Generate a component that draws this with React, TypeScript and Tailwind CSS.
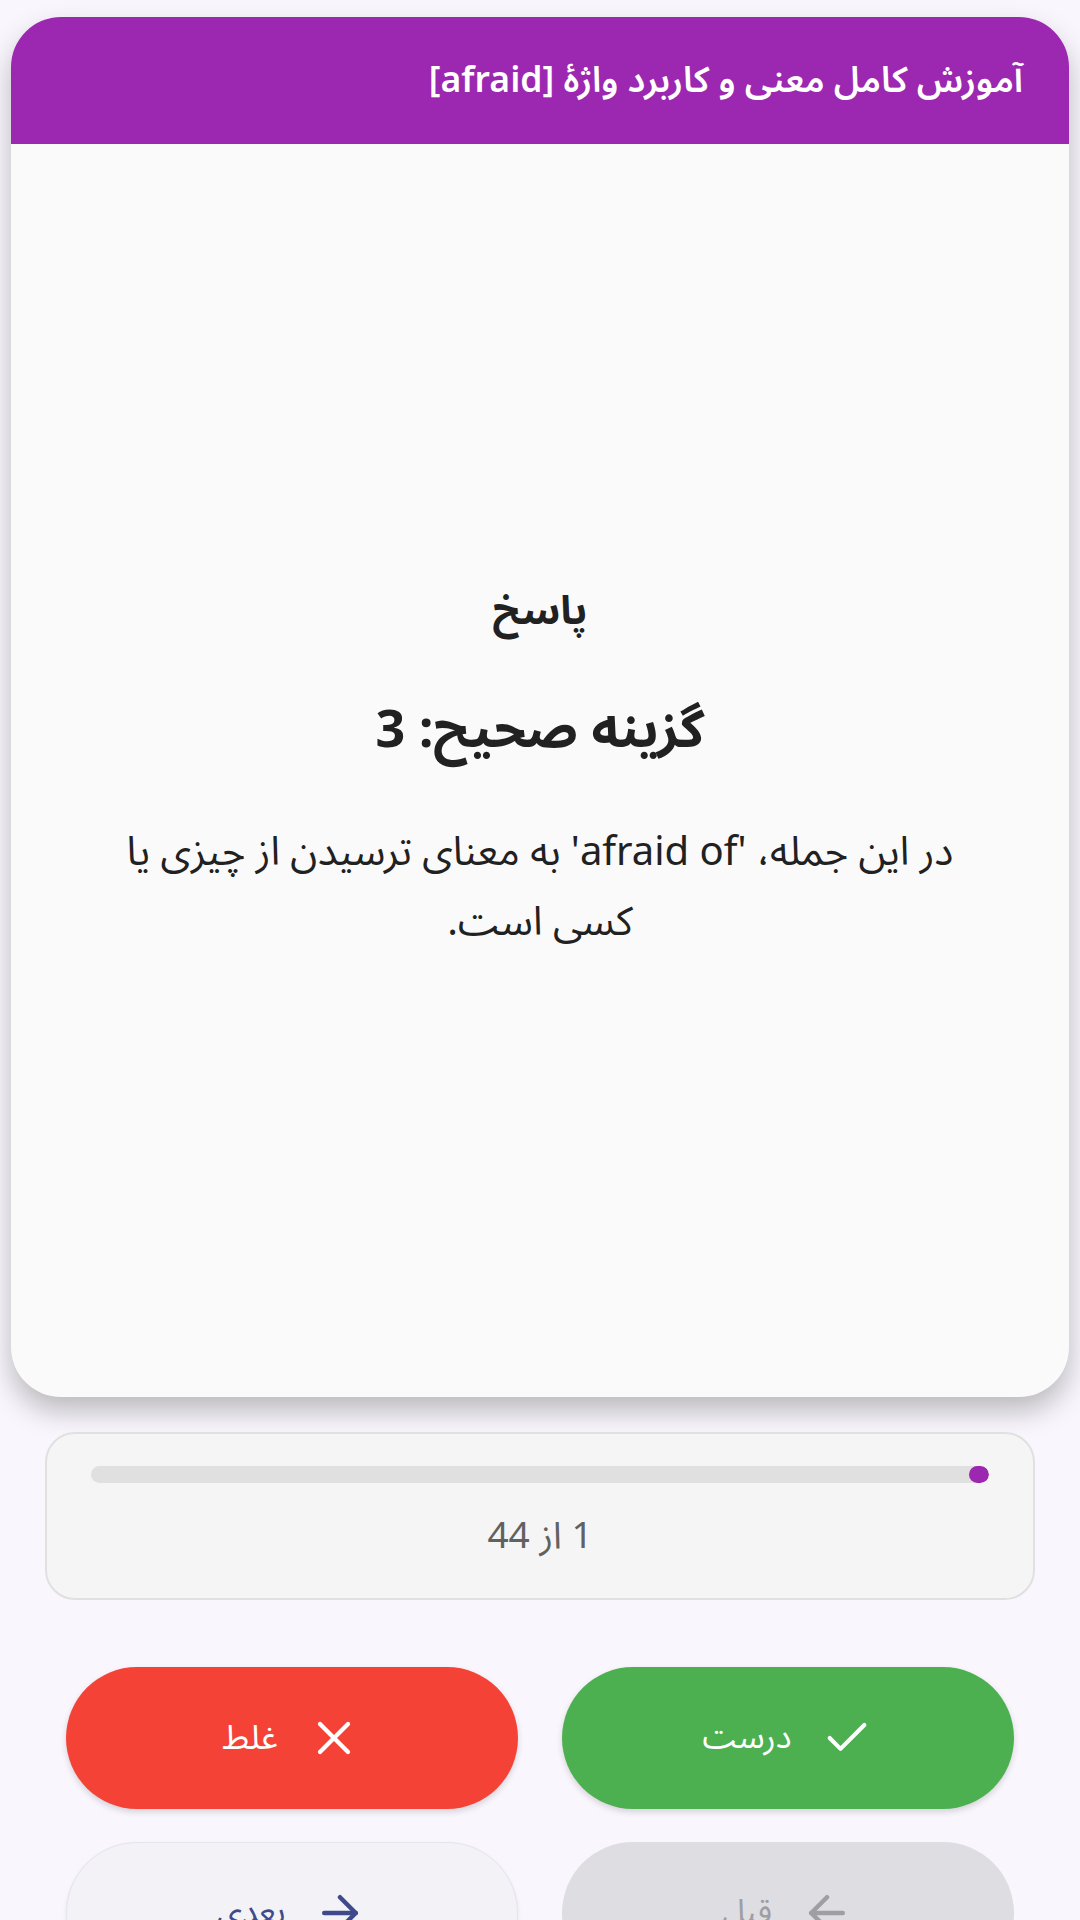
import { ArrowLeft, ArrowRight, Check, X } from 'lucide-react';

const font = {
  fontFamily: '"Noto Sans Arabic", "Noto Naskh Arabic", Roboto, "DejaVu Sans", sans-serif',
};

export default function App() {
  const current = 1;
  const total = 44;

  return (
    <div dir="rtl" style={font} className="w-[1080px] h-[1920px] overflow-hidden bg-[#f9f7fd]">
      <div className="px-[11px] pt-[17px]">
        {/* flashcard */}
        <div className="h-[1380px] rounded-[50px] bg-[#fafafa] overflow-hidden flex flex-col shadow-[0_14px_28px_rgba(0,0,0,0.25)]">
          <div className="h-[127px] shrink-0 bg-[#9c27b0] flex items-center px-[46px]">
            <h1 className="text-white text-[35.5px] font-semibold whitespace-nowrap">
              آموزش کامل معنی و کاربرد واژهٔ [afraid]
            </h1>
          </div>
          <div className="flex-1 flex flex-col items-center justify-center px-[40px] text-center text-[#212121]">
            <h2 className="text-[40px] leading-[56px] font-bold">پاسخ</h2>
            <h3 className="mt-[59px] text-[52px] leading-[64px] font-bold">گزینه صحیح: 3</h3>
            <p className="mt-[55px] text-[40px] leading-[70px]">
              در این جمله، 'afraid of' به معنای ترسیدن از چیزی یا
              <br />
              کسی است.
            </p>
          </div>
        </div>

        {/* progress */}
        <div className="mx-[34px] mt-[35px] h-[168px] rounded-[30px] border-2 border-[#e0e0e0] bg-[#f5f5f5] px-[44px] pt-[32px]">
          <div className="h-[17px] rounded-full bg-[#e0e0e0] overflow-hidden">
            <div
              className="h-full rounded-full bg-[#9c27b0]"
              style={{ width: `${(current / total) * 100}%` }}
            />
          </div>
          <div className="mt-[26px] text-center text-[37px] text-[#616161]">
            {current} از {total}
          </div>
        </div>
      </div>

      {/* answer buttons */}
      <div className="mt-[67px] px-[66px] grid grid-cols-2 gap-[44px]">
        <button className="h-[142px] rounded-full bg-[#4caf50] text-white flex items-center justify-center gap-[30px] shadow-[0_3px_6px_rgba(0,0,0,0.15)]">
          <Check size={52} strokeWidth={1.9} />
          <span className="text-[33px]">درست</span>
        </button>
        <button className="h-[142px] rounded-full bg-[#f44336] text-white flex items-center justify-center gap-[28px] shadow-[0_3px_6px_rgba(0,0,0,0.15)]">
          <X size={56} strokeWidth={1.8} />
          <span className="text-[34px]">غلط</span>
        </button>
      </div>

      {/* navigation */}
      <div className="mt-[33px] px-[66px] grid grid-cols-2 gap-[44px]">
        <button className="h-[142px] rounded-full bg-[#dedde2] text-[#9e9ea3] flex items-center justify-center gap-[28px]">
          <ArrowLeft size={54} strokeWidth={2} />
          <span className="text-[33px]">قبل</span>
        </button>
        <button className="h-[142px] rounded-full bg-[#f3f2f7] text-[#3f4a8a] border border-[#e6e4ec] flex items-center justify-center gap-[28px] shadow-[0_2px_4px_rgba(0,0,0,0.08)]">
          <ArrowRight size={54} strokeWidth={2} />
          <span className="text-[33px]">بعدی</span>
        </button>
      </div>
    </div>
  );
}
